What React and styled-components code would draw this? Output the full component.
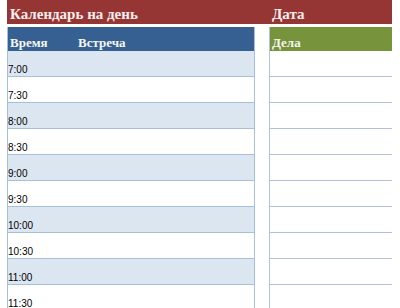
import styled, { createGlobalStyle } from "styled-components";

const GlobalStyle = createGlobalStyle`
  body {
    margin: 0;
    background: #ffffff;
  }
`;

const times = ["7:00", "7:30", "8:00", "8:30", "9:00", "9:30", "10:00", "10:30", "11:00", "11:30"];

const App = () => {
  return (
    <>
      <GlobalStyle />
      <Page>
        <TitleBar>
          <Title>Календарь на день</Title>
          <Title>Дата</Title>
        </TitleBar>
        <Columns>
          <Schedule>
            <HeadRow $color="#376092">
              <HeadCell $width="66px">Время</HeadCell>
              <HeadCell>Встреча</HeadCell>
            </HeadRow>
            {times.map((t, i) => (
              <SlotRow key={t} $shaded={i % 2 === 0}>
                <TimeLabel>{t}</TimeLabel>
              </SlotRow>
            ))}
          </Schedule>
          <Tasks>
            <HeadRow $color="#77933c">
              <HeadCell>Дела</HeadCell>
            </HeadRow>
            {times.map((t) => (
              <TaskRow key={t} />
            ))}
          </Tasks>
        </Columns>
      </Page>
    </>
  );
};

export default App;

const Page = styled.div`
  width: 385px;
  padding-left: 7px;
  height: 308px;
  overflow: hidden;
`;

const TitleBar = styled.div`
  display: grid;
  grid-template-columns: 262px 1fr;
  align-items: end;
  height: 24px;
  background-color: #963634;
  padding-bottom: 2px;
  box-sizing: border-box;
`;

const Title = styled.div`
  color: #fbefee;
  font-family: "Liberation Serif", serif;
  font-weight: bold;
  font-size: 15px;
  line-height: 16px;
  padding-left: 3px;
  white-space: nowrap;
`;

const Columns = styled.div`
  display: grid;
  grid-template-columns: 248px 123px;
  column-gap: 14px;
  margin-top: 3px;
`;

const Schedule = styled.div`
  display: flex;
  flex-direction: column;
  border-left: 1px solid #a7bfde;
  border-right: 1px solid #a7bfde;
`;

const Tasks = styled.div`
  display: flex;
  flex-direction: column;
  border-left: 1px solid #b4bfe0;
`;

const HeadRow = styled.div`
  display: flex;
  align-items: flex-end;
  height: 24px;
  box-sizing: border-box;
  padding-bottom: 2px;
  background-color: ${(p) => p.$color};
`;

const HeadCell = styled.div`
  width: ${(p) => p.$width || "auto"};
  padding-left: 2px;
  color: #f6f6f0;
  font-family: "Liberation Serif", serif;
  font-weight: bold;
  font-size: 13px;
  line-height: 13px;
  white-space: nowrap;
`;

const SlotRow = styled.div`
  display: flex;
  align-items: flex-end;
  height: 26px;
  box-sizing: border-box;
  border-bottom: 1px solid #a7bfde;
  background-color: ${(p) => (p.$shaded ? "#dce6f1" : "#ffffff")};
`;

const TimeLabel = styled.span`
  font-family: "Liberation Sans", sans-serif;
  font-size: 10px;
  line-height: 10px;
  color: #000000;
  padding: 0 0 1px 0;
`;

const TaskRow = styled.div`
  height: 26px;
  box-sizing: border-box;
  border-bottom: 1px solid #b4bfe0;
`;
